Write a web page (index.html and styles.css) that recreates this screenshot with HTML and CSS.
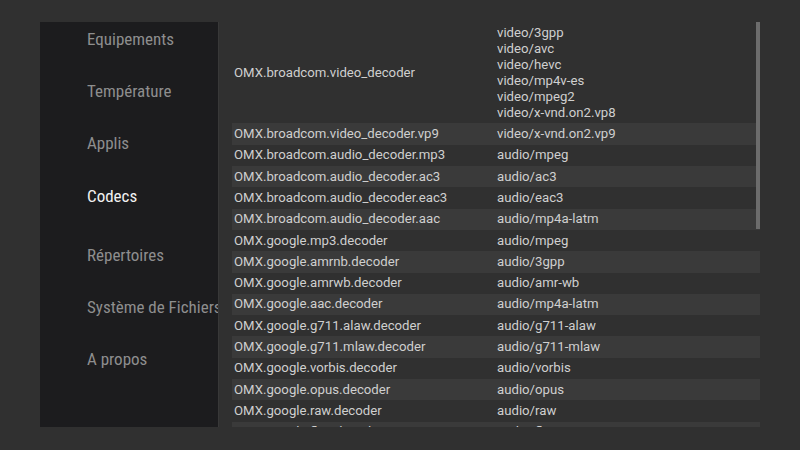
FILE: index.html
```html
<!DOCTYPE html>
<html>
<head>
<meta charset="utf-8">
<link rel="stylesheet" href="styles.css">
</head>
<body>
<div class="app">
  <nav class="sidebar">
    <div class="item">Equipements</div>
    <div class="item">Température</div>
    <div class="item">Applis</div>
    <div class="item selected">Codecs</div>
    <div class="item">Répertoires</div>
    <div class="item">Système de Fichiers</div>
    <div class="item">A propos</div>
  </nav>
  <main class="content">
    <div class="table">
      <div class="row tall">
        <div class="name">OMX.broadcom.video_decoder</div>
        <div class="types">
          <div>video/3gpp</div>
          <div>video/avc</div>
          <div>video/hevc</div>
          <div>video/mp4v-es</div>
          <div>video/mpeg2</div>
          <div>video/x-vnd.on2.vp8</div>
        </div>
      </div>
      <div class="row alt"><div class="name">OMX.broadcom.video_decoder.vp9</div><div class="types">video/x-vnd.on2.vp9</div></div>
      <div class="row"><div class="name">OMX.broadcom.audio_decoder.mp3</div><div class="types">audio/mpeg</div></div>
      <div class="row alt"><div class="name">OMX.broadcom.audio_decoder.ac3</div><div class="types">audio/ac3</div></div>
      <div class="row"><div class="name">OMX.broadcom.audio_decoder.eac3</div><div class="types">audio/eac3</div></div>
      <div class="row alt"><div class="name">OMX.broadcom.audio_decoder.aac</div><div class="types">audio/mp4a-latm</div></div>
      <div class="row"><div class="name">OMX.google.mp3.decoder</div><div class="types">audio/mpeg</div></div>
      <div class="row alt"><div class="name">OMX.google.amrnb.decoder</div><div class="types">audio/3gpp</div></div>
      <div class="row"><div class="name">OMX.google.amrwb.decoder</div><div class="types">audio/amr-wb</div></div>
      <div class="row alt"><div class="name">OMX.google.aac.decoder</div><div class="types">audio/mp4a-latm</div></div>
      <div class="row"><div class="name">OMX.google.g711.alaw.decoder</div><div class="types">audio/g711-alaw</div></div>
      <div class="row alt"><div class="name">OMX.google.g711.mlaw.decoder</div><div class="types">audio/g711-mlaw</div></div>
      <div class="row"><div class="name">OMX.google.vorbis.decoder</div><div class="types">audio/vorbis</div></div>
      <div class="row alt"><div class="name">OMX.google.opus.decoder</div><div class="types">audio/opus</div></div>
      <div class="row"><div class="name">OMX.google.raw.decoder</div><div class="types">audio/raw</div></div>
      <div class="row alt"><div class="name">OMX.google.flac.decoder</div><div class="types">audio/flac</div></div>
    </div>
    <div class="scrollbar"></div>
  </main>
</div>
</body>
</html>
```

FILE: styles.css
```css
html, body {
  margin: 0;
  padding: 0;
  background: #303030;
  width: 800px;
  height: 450px;
  overflow: hidden;
}

.app {
  display: flex;
  padding: 22px 40px 0 40px;
  height: 405px;
}

.sidebar {
  width: 179px;
  flex: none;
  background: #1c1c1e;
  border-right: 1px solid #383838;
  padding-top: 7px;
  box-sizing: border-box;
  display: flex;
  flex-direction: column;
  gap: 32px;
  font-family: "Roboto Condensed", "Liberation Sans Narrow", Roboto, sans-serif;
  font-size: 17px;
  line-height: 20px;
  color: #8e8e8e;
  overflow: hidden;
  white-space: nowrap;
}

.item {
  padding-left: 47px;
}

.item.selected {
  color: #f2f2f2;
  margin-top: 1px;
  margin-bottom: 7px;
}

.content {
  flex: 1;
  position: relative;
  overflow: hidden;
  padding-left: 13px;
  height: 405px;
}

.table {
  font-family: Roboto, "Noto Sans", sans-serif;
  font-size: 13.2px;
  line-height: 16px;
  color: #cfcfcf;
}

.row {
  display: grid;
  grid-template-columns: 265px 1fr;
  align-items: center;
  padding: 2.667px 0;
  white-space: nowrap;
}

.row.alt {
  background: #3a3a3a;
}

.name {
  padding-left: 2px;
}

.scrollbar {
  position: absolute;
  right: 0;
  top: 0;
  width: 4px;
  height: 207px;
  background: #6c6c6c;
}
```
